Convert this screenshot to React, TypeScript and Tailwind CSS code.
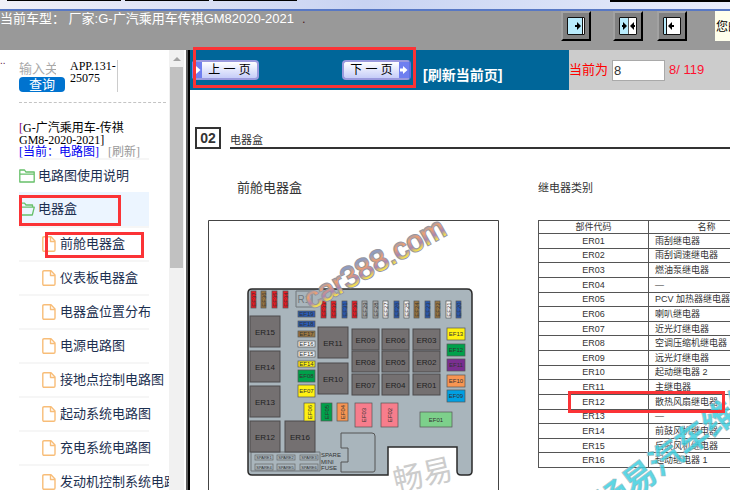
import type { ReactNode } from "react";

const PAGES = [
  "前舱电器盒",
  "仪表板电器盒",
  "电器盒位置分布",
  "电源电路图",
  "接地点控制电路图",
  "起动系统电路图",
  "充电系统电路图",
  "发动机控制系统电路图",
];

const RELAY_ROWS = [
  ["ER01", "雨刮继电器"],
  ["ER02", "雨刮调速继电器"],
  ["ER03", "燃油泵继电器"],
  ["ER04", "—"],
  ["ER05", "PCV 加热器继电器"],
  ["ER06", "喇叭继电器"],
  ["ER07", "近光灯继电器"],
  ["ER08", "空调压缩机继电器"],
  ["ER09", "远光灯继电器"],
  ["ER10", "起动继电器 2"],
  ["ER11", "主继电器"],
  ["ER12", "散热风扇继电器"],
  ["ER13", "—"],
  ["ER14", "前鼓风机继电器"],
  ["ER15", "后鼓风机继电器"],
  ["ER16", "起动继电器 1"],
];

type Part = [name: string, x: number, y: number, w: number, h: number, fill?: string];

const RED = "#ee1c25";
const BLUE = "#2a5bb5";
const BROWN = "#9a7842";
const GREY = "#a9adad";
const WHITE = "#f8f8f8";
const YELLOW = "#fff112";
const GREEN = "#00a14b";
const ORANGE = "#f79552";
const PINK = "#f77d8c";

const RELAYS: Part[] = [
  ["ER15", 42, 96, 30, 31],
  ["ER14", 42, 131, 30, 31],
  ["ER13", 42, 166, 30, 31],
  ["ER12", 42, 201, 30, 31],
  ["ER16", 77, 201, 30, 31],
  ["ER11", 110, 107, 30, 31],
  ["ER10", 110, 143, 30, 31],
  ["ER09", 144, 109, 27, 21],
  ["ER06", 174, 109, 27, 21],
  ["ER03", 205, 109, 27, 21],
  ["ER08", 144, 131, 27, 21],
  ["ER05", 174, 131, 27, 21],
  ["ER02", 205, 131, 27, 21],
  ["ER07", 144, 154, 27, 21],
  ["ER04", 174, 154, 27, 21],
  ["ER01", 205, 154, 27, 21],
];

const FLAT_FUSES: Part[] = [
  ["EF19", 90, 91, 17, 6, BLUE],
  ["EF18", 90, 101, 17, 6, BLUE],
  ["EF17", 90, 111, 17, 6, BROWN],
  ["EF16", 90, 121, 17, 6, WHITE],
  ["EF15", 90, 131, 17, 6, WHITE],
  ["EF14", 90, 141, 17, 6, YELLOW],
  ["EF08", 90, 150, 17, 12, GREEN],
  ["EF07", 90, 165, 17, 12, YELLOW],
  ["EF13", 239, 108, 18, 12, YELLOW],
  ["EF12", 239, 124, 18, 12, GREEN],
  ["EF11", 239, 139, 18, 12, "#7a2f91"],
  ["EF10", 239, 155, 18, 12, ORANGE],
  ["EF09", 239, 170, 18, 12, "#00a0e3"],
  ["EF01", 212, 192, 32, 15, "#7dd08b"],
];

const UPRIGHT_FUSES: Part[] = [
  ["EF37", 43, 71, 5, 17, RED],
  ["EF36", 53, 71, 5, 17, BROWN],
  ["EF35", 64, 71, 5, 17, RED],
  ["EF34", 75, 71, 5, 17, RED],
  ["EF33", 113, 81, 5, 17, RED],
  ["EF32", 123, 81, 5, 17, RED],
  ["EF31", 134, 81, 5, 17, BLUE],
  ["EF30", 144, 81, 5, 17, RED],
  ["EF29", 154, 81, 5, 17, GREY],
  ["EF28", 165, 81, 5, 17, GREY],
  ["EF27", 175, 81, 5, 17, WHITE],
  ["EF26", 186, 81, 5, 17, BLUE],
  ["EF25", 196, 81, 5, 17, WHITE],
  ["EF24", 206, 81, 5, 17, BROWN],
  ["EF23", 217, 81, 5, 17, BLUE],
  ["EF22", 227, 81, 5, 17, BROWN],
  ["EF21", 238, 81, 5, 17, WHITE],
  ["EF20", 248, 81, 5, 17, BLUE],
  ["EF06", 96, 183, 11, 18, YELLOW],
  ["EF05", 113, 183, 11, 18, GREEN],
  ["EF04", 129, 183, 11, 18, ORANGE],
  ["EF03", 147, 183, 17, 24, PINK],
  ["EF02", 173, 183, 17, 24, PINK],
];

const SPARES: Part[] = [
  ["SPARE1", 47, 235, 18, 5],
  ["SPARE2", 69, 235, 18, 5],
  ["SPARE3", 92, 235, 18, 5],
  ["SPARE4", 47, 244, 18, 6],
  ["SPARE5", 69, 244, 18, 6],
  ["SPARE6", 92, 244, 18, 6],
];

export default function App() {
  return (
    <div className="flex h-screen flex-col overflow-hidden bg-white font-['Liberation_Sans','Noto_Sans_CJK_SC',sans-serif] text-[13px]">
      <WindowEdge />
      <Header />
      <div className="flex min-h-0 flex-1">
        <Sidebar />
        <main className="min-w-0 flex-1">
          <Toolbar />
          <Sheet />
        </main>
      </div>
    </div>
  );
}

function WindowEdge() {
  return (
    <div className="flex h-[11px] shrink-0 items-start border-b-2 border-[#5878c4] bg-linear-to-r from-[#f0f0f8] via-[#c8d3f2] to-[#e9edfb] pl-[7px]">
      <div className="h-px w-[114px] bg-black" />
      <div className="ml-1 h-px w-[84px] bg-black" />
      <div className="ml-1 h-px w-[84px] bg-black" />
      <div className="ml-auto h-[2px] w-[120px] bg-black" />
    </div>
  );
}

function Header() {
  return (
    <header className="flex h-[39px] shrink-0 items-start bg-[#999] whitespace-nowrap text-white">
      <p className="leading-4">
        当前车型： 厂家:G-广汽乘用车传祺GM82020-2021
        <span className="ml-2 text-[#502020]">.</span>
      </p>
      <div className="ml-auto flex items-start">
        <FrameButton label="展开左侧">
          <path d="M0 0h18v18H0z" fill="#fff" />
          <path d="M1 1h14v16H1z" fill="#b9ecfd" />
          <path d="M15.500 1v16" stroke="#111" />
          <path d="M8 8h2V5l4 4-4 4v-3H8z" fill="#000" />
        </FrameButton>
        <FrameButton label="左右均分" className="ml-[22px]">
          <path d="M0 0h18v18H0z" fill="#fff" />
          <path d="M1 1h8v16H1z" fill="#b9ecfd" />
          <path d="M9.500 1v16" stroke="#555" />
          <path d="M3 8h1V5l4 4-4 4v-3H3zM16 8h-1V5l-4 4 4 4v-3h1z" fill="#000" />
        </FrameButton>
        <FrameButton label="收起左侧" className="ml-[14px]">
          <path d="M0 0h18v18H0z" fill="#fff" />
          <path d="M1 1h2v16H1z" fill="#b9ecfd" />
          <path d="M3.500 1v16" stroke="#111" />
          <path d="M11 8H9V5L5 9l4 4v-3h2z" fill="#000" />
        </FrameButton>
        <div className="ml-[28px] h-[30px] w-[15px] overflow-hidden bg-[#ffffec] pl-px text-xs leading-8 text-black">
          您的
        </div>
      </div>
    </header>
  );
}

interface FrameButtonProps {
  label: string;
  className?: string;
  children: ReactNode;
}

function FrameButton({ label, className = "", children }: FrameButtonProps) {
  return (
    <button
      type="button"
      aria-label={label}
      className={`flex h-[30px] w-[30px] items-center justify-center border-2 border-t-[#a2a2a2] border-r-black border-b-black border-l-[#a2a2a2] bg-[#808080] ${className}`}
    >
      <svg width="18" height="18" viewBox="0 0 18 18">
        {children}
        <path d="M.5.5h17v17H.5z" fill="none" stroke="#111" />
      </svg>
    </button>
  );
}

function Sidebar() {
  return (
    <aside className="flex w-[190px] shrink-0 border-r-2 border-black">
      <div className="min-w-0 flex-1 overflow-hidden whitespace-nowrap">
        <div className="flex pt-[10px]">
          <span className="w-[19px] text-[10px] leading-none text-[#602040]">
            <span className="-mt-1 block">..</span>
          </span>
          <form className="w-[46px]">
            <input
              aria-label="关键字"
              placeholder="输入关键字"
              className="block h-[17px] w-[37px] text-[13px] leading-4 outline-none placeholder:text-[#a9a9a9]"
            />
            <button
              type="button"
              className="block h-[15px] w-full rounded bg-[#0073cf] text-[13px] leading-[14px] text-white"
            >
              查询
            </button>
          </form>
          <p className="ml-[5px] h-8 w-[48px] border-r border-[#ccc] font-['Liberation_Serif',serif] text-xs leading-3">
            APP.131-
            <br />
            25075
          </p>
        </div>
        <div className="mt-[10px] mr-[3px] ml-[19px] border-t border-dashed border-[#c4c4c4]" />
        <div className="mt-[19px] ml-[19px] h-9 font-['Liberation_Serif','Noto_Sans_CJK_SC',serif] text-xs leading-3">
          <p>
            <span className="text-[#800080]">[</span>G-广汽乘用车-传祺
            <br />
            GM8-2020-2021]
          </p>
          <p>
            <a href="#current" className="text-[#0000f0]">
              [当前：电路图]
            </a>
            <a href="#refresh" className="ml-[9px] text-[#999]">
              [刷新]
            </a>
          </p>
        </div>
        <nav className="ml-[19px] w-[130px] text-[#1c2f50]">
          <a href="#usage" className="flex h-[34px] items-center gap-[3px] border-t-2 border-[#f6f6f6]">
            <FolderIcon />
            电路图使用说明
          </a>
          <a href="#boxes" className="relative flex h-[34px] items-center gap-[3px] bg-[#ecf5ff]">
            <FolderIcon open />
            电器盒
            <span className="absolute top-[3px] left-0 h-[31px] w-[102px] border-3 border-[#fb3336]" />
          </a>
          {PAGES.map((page, i) => (
            <a
              key={page}
              href={`#page-${i + 1}`}
              className="relative flex h-[34px] items-center gap-1 border-t-2 border-[#f6f6f6] pl-[23px]"
            >
              <FileIcon />
              {page}
              {i === 0 && (
                <span className="absolute top-1 left-[26px] h-[26px] w-[99px] border-3 border-[#fb3336]" />
              )}
            </a>
          ))}
        </nav>
      </div>
      <div className="flex w-[15px] shrink-0 flex-col items-center bg-[#f1f1f1]">
        <svg width="8" height="17" viewBox="0 0 8 17">
          <path d="M0 11h8L4 7z" fill="#a3a3a3" />
        </svg>
        <div className="h-[201px] w-[13px] bg-[#c1c1c1]" />
      </div>
      <div className="ml-[2px] w-[2px] shrink-0 bg-[#5c5c5c]" />
    </aside>
  );
}

function FolderIcon({ open = false }: { open?: boolean }) {
  return (
    <svg className="shrink-0" width="16" height="14" viewBox="0 0 16 14" fill="none" stroke="#67c06a" strokeWidth="1.300" strokeLinejoin="round">
      {open ? (
        <path d="M1 12.500V1.200h4.500L7 3h6.500v2M1 12.500V5.200H15.300L13.300 13H1.200z" />
      ) : (
        <path d="M.8 13V1h4.800l1.200 2h8.400v10zM.8 5.200h14.400" />
      )}
    </svg>
  );
}

function FileIcon() {
  return (
    <svg className="shrink-0" width="14" height="16" viewBox="0 0 14 16" fill="none" stroke="#f8bd78" strokeWidth="1.400" strokeLinejoin="round">
      <path d="M2 .8h7l4 4.200v9q0 1.200-1.200 1.200H2Q.8 15.200.8 14V2Q.8.8 2 .8z" />
      <path d="M8.500 1v4.500H13" />
    </svg>
  );
}

function Toolbar() {
  return (
    <div className="flex h-10 bg-[#ccc] whitespace-nowrap">
      <div className="relative flex w-[379px] shrink-0 items-center bg-[#069]">
        <button
          type="button"
          className="ml-[2px] flex h-5 w-[67px] items-center rounded-sm border-2 border-l-0 border-[#9a9ade] bg-linear-to-b from-white to-[#c6cdf8] text-xs text-black"
        >
          <PageArrow />
          <span className="flex-1 leading-4">上 一 页</span>
        </button>
        <button
          type="button"
          className="ml-[83px] flex h-5 w-[69px] items-center rounded-sm border-2 border-[#9a9ade] border-r-[#5f72dc] bg-linear-to-b from-white to-[#c6cdf8] text-xs text-black"
        >
          <span className="flex-1 leading-4">下 一 页</span>
          <PageArrow />
        </button>
        <a href="#reload" className="ml-3 pt-[10px] text-sm font-bold text-white">
          [刷新当前页]
        </a>
        <span className="pointer-events-none absolute -top-[3px] left-[3px] h-[41px] w-[223px] border-3 border-[#fb3336]" />
      </div>
      <div className="flex items-center text-[#f00]">
        <label htmlFor="page-no">当前为</label>
        <input
          id="page-no"
          defaultValue="8"
          className="mr-1 ml-1 h-[21px] w-[53px] border border-[#a9a9a9] bg-white px-px text-[13px] text-[#333]"
        />
        <span className="text-[#ff1030]">8/ 119</span>
      </div>
    </div>
  );
}

function PageArrow() {
  return (
    <svg className="shrink-0" width="10" height="16" viewBox="0 0 10 16">
      <path d="M0 0h10v16H0z" fill="#6f7ff0" />
      <path d="M1 6.500h3v-2.500L8.500 8 4 12v-2.500H1z" fill="#fff" />
    </svg>
  );
}

function Sheet() {
  return (
    <article className="text-[#333]">
      <div className="flex items-start pt-[37px] pl-[5px]">
        <span className="h-[22px] w-[26px] border-2 border-[#333] text-center text-sm leading-[18px] font-bold">
          02
        </span>
        <h1 className="ml-[9px] h-[22px] flex-1 border-b-2 border-[#333] pt-[5px] text-[11px] leading-4">
          电器盒
        </h1>
      </div>
      <div className="flex pt-[30px] pl-[18px]">
        <section className="w-[330px] shrink-0">
          <h2 className="pl-[29px] text-[13px] leading-[18px]">前舱电器盒</h2>
          <FuseBox />
        </section>
        <section className="min-w-0 flex-1 overflow-hidden">
          <h2 className="text-[11px] leading-[18px]">继电器类别</h2>
          <div className="relative mt-[23px] h-[270px] w-[227px]">
            <table className="h-[248px] w-full table-fixed border-collapse text-[9px] leading-3 whitespace-nowrap">
              <thead>
                <tr>
                  <th className="w-[110px] border border-[#555] p-0 font-normal">部件代码</th>
                  <th className="border border-[#555] p-0 font-normal">名称</th>
                </tr>
              </thead>
              <tbody>
                {RELAY_ROWS.map(([code, name]) => (
                  <tr key={code}>
                    <td className="border border-[#555] p-0 text-center">{code}</td>
                    <td className="border border-[#555] p-0 pl-[6px]">{name}</td>
                  </tr>
                ))}
              </tbody>
            </table>
            <svg className="pointer-events-none absolute inset-0" width="227" height="270">
              <text
                transform="translate(69 297) rotate(-37)"
                fontSize="33"
                fontWeight="bold"
                fill="#3fcfe0"
                fillOpacity=".85"
                stroke="#a9b8bb"
                strokeWidth=".5"
              >
                畅易汽车维修
              </text>
            </svg>
            <span className="absolute top-[171px] left-[30px] h-[22px] w-[157px] border-3 border-[#fb3336]" />
          </div>
        </section>
      </div>
    </article>
  );
}

function FuseBox() {
  return (
    <svg
      className="mt-[23px] block overflow-visible"
      width="291"
      height="271"
      viewBox="0 0 291 271"
      textAnchor="middle"
      fill="#333"
      role="img"
      aria-label="前舱电器盒"
    >
      <defs>
        <linearGradient id="mark" x1="0" y1="0" x2="0" y2="1">
          <stop offset=".25" stopColor="#8f9cc0" />
          <stop offset=".45" stopColor="#eda070" />
          <stop offset=".65" stopColor="#a984b4" />
          <stop offset=".8" stopColor="#f2e24c" />
        </linearGradient>
      </defs>
      <path d="M.5 280V.5h290V280" fill="none" stroke="#444" />
      <path
        d="M44 69H259q5 0 5 5V251q0 4-4 4H253q-4 0-4-4V227H180V255H44q-4 0-4-4V73q0-4 4-4z"
        fill="#a9b5bc"
        stroke="#2a2a2a"
        strokeWidth="1.500"
      />
      <path d="M133 213h31q3 0 3 3v34q0 2-2 2h-32v-10h7v-14h-7z" fill="none" stroke="#555" />
      <path d="M43 232h69v19H43zM88 71h16v16H88z" fill="none" stroke="#70777b" />
      <text x="96" y="83" fontSize="10" fill="#70777b">
        R1
      </text>

      {RELAYS.map(([name, x, y, w, h]) => (
        <g key={name}>
          <rect x={x} y={y} width={w} height={h} fill="#747071" stroke="#4d4b4c" />
          <text x={x + w / 2} y={y + h / 2 + 3} fontSize="8" fill="#222">
            {name}
          </text>
        </g>
      ))}

      {FLAT_FUSES.map(([name, x, y, w, h, fill]) => (
        <g key={name}>
          <rect x={x} y={y} width={w} height={h} fill={fill} stroke="#555" strokeWidth=".7" />
          <text x={x + w / 2} y={y + h / 2 + 2} fontSize="6">
            {name}
          </text>
        </g>
      ))}

      {UPRIGHT_FUSES.map(([name, x, y, w, h, fill]) => (
        <g key={name}>
          <rect x={x} y={y} width={w} height={h} fill={fill} stroke="#555" strokeWidth=".7" />
          <text
            transform={`translate(${x + w / 2 + 2} ${y + h / 2}) rotate(-90)`}
            fontSize="6"
          >
            {name}
          </text>
        </g>
      ))}

      {SPARES.map(([name, x, y, w, h]) => (
        <g key={name}>
          <rect x={x} y={y} width={w} height={h} fill="none" stroke="#666" strokeWidth=".7" />
          <text x={x + w / 2} y={y + h - 1} fontSize="4">
            {name}
          </text>
        </g>
      ))}

      <g fontSize="6" textAnchor="start">
        <text x="113" y="237">SPARE</text>
        <text x="113" y="244">MINI</text>
        <text x="113" y="250">FUSE</text>
      </g>

      <text
        transform="translate(103 90) rotate(-29)"
        textAnchor="start"
        fontSize="30"
        fill="url(#mark)"
        stroke="#96969e"
        strokeWidth="2"
        paintOrder="stroke"
      >
        car388.com
      </text>
      <text
        transform="translate(188 272) rotate(-13)"
        textAnchor="start"
        fontSize="30"
        fill="#ccc"
      >
        畅易
      </text>
    </svg>
  );
}
